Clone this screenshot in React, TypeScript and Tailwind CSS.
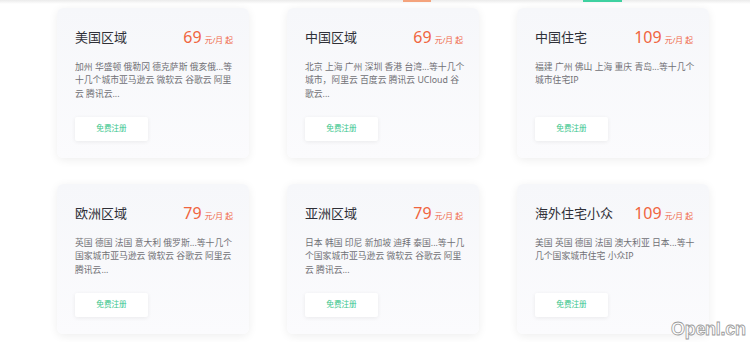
import React from "react";

type Card = { title: string; price: string; lines: string[] };

const cards: Card[] = [
  { title: "美国区域", price: "69", lines: ["加州 华盛顿 俄勒冈 德克萨斯 俄亥俄...等", "十几个城市亚马逊云 微软云 谷歌云 阿里", "云 腾讯云..."] },
  { title: "中国区域", price: "69", lines: ["北京 上海 广州 深圳 香港 台湾...等十几个", "城市，阿里云 百度云 腾讯云 UCloud 谷", "歌云..."] },
  { title: "中国住宅", price: "109", lines: ["福建 广州 佛山 上海 重庆 青岛...等十几个", "城市住宅IP"] },
  { title: "欧洲区域", price: "79", lines: ["英国 德国 法国 意大利 俄罗斯...等十几个", "国家城市亚马逊云 微软云 谷歌云 阿里云", "腾讯云..."] },
  { title: "亚洲区域", price: "79", lines: ["日本 韩国 印尼 新加坡 迪拜 泰国...等十几", "个国家城市亚马逊云 微软云 谷歌云 阿里", "云 腾讯云..."] },
  { title: "海外住宅小众", price: "109", lines: ["美国 英国 德国 法国 澳大利亚 日本...等十", "几个国家城市住宅 小众IP"] },
];

export default function App() {
  return (
    <div
      className="relative w-[750px] h-[342px] overflow-hidden bg-white"
      style={{ fontFamily: '"Noto Sans", "Noto Sans CJK SC", sans-serif' }}
    >
      <div className="flex h-[4px] bg-gradient-to-b from-[#ebebeb] to-white">
        <div className="ml-[403px] w-[28px] h-[2px] bg-[#f4a37c]" />
        <div className="ml-[152px] w-[39px] h-[2px] bg-[#3fd1a0]" />
      </div>
      <div className="grid grid-cols-[192px_192px_192px] gap-x-[38px] gap-y-[26px] pl-[57px] pt-[4px]">
        {cards.map((c) => (
          <div
            key={c.title}
            className="flex flex-col h-[150px] rounded-[6px] bg-gradient-to-b from-[#f6f7fa] to-[#fbfbfd] shadow-[0_2px_10px_rgba(0,0,0,0.07)] pt-[17px] pl-[18px] pr-[16px]"
          >
            <div className="flex items-center justify-between h-[24px]">
              <div className="text-[13px] leading-[24px] text-[#2f3038]">{c.title}</div>
              <div className="flex items-baseline text-[#f0653f]">
                <span className="text-[16px] leading-[24px]">{c.price}</span>
                <span className="ml-[3px] text-[7.8px]">元/月 起</span>
              </div>
            </div>
            <div className="mt-[12px] h-[40px] text-[8.8px] leading-[13.3px] text-[#707075] whitespace-nowrap">
              {c.lines.map((l, i) => (
                <div key={i}>{l}</div>
              ))}
            </div>
            <div className="mt-[16px] flex items-center justify-center w-[73px] h-[24px] rounded-[2px] bg-white shadow-[0_1px_4px_rgba(0,0,0,0.07)] text-[7.6px] text-[#35c58c]">
              免费注册
            </div>
          </div>
        ))}
      </div>
      <div
        className="absolute left-[671px] top-[316px] text-[18px] font-bold text-white tracking-[-0.3px]"
        style={{ fontFamily: '"Liberation Sans", Arial, sans-serif', WebkitTextStroke: "0.8px #9a9a9a" }}
      >
        Openl.cn
      </div>
    </div>
  );
}
